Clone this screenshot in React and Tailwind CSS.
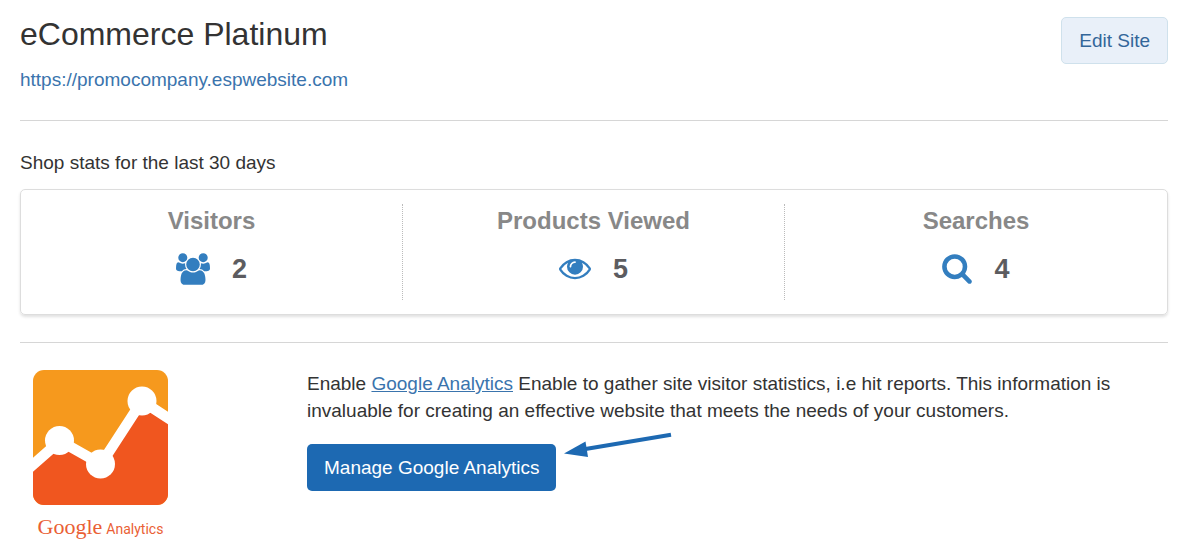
import React from "react";

const UsersIcon = () => (
  <svg viewBox="0 0 1920 1792" className="h-8 w-[34px]" fill="currentColor" aria-hidden="true">
    <path d="M593 896q-162 5-265 128h-134q-82 0-138-40.5t-56-118.5q0-353 124-353 6 0 43.5 21t97.5 42.5 119 21.5q67 0 133-23-5 37-5 66 0 139 81 256zm1071 637q0 120-73 189.5t-194 69.5h-874q-121 0-194-69.5t-73-189.5q0-53 3.5-103.5t14-109 26.5-108.5 43-97.5 62-81 85.5-53.5 111.5-20q10 0 43 21.5t73 48 107 48 135 21.5 135-21.5 107-48 73-48 43-21.5q61 0 111.5 20t85.5 53.5 62 81 43 97.5 26.5 108.5 14 109 3.5 103.5zm-1024-1277q0 106-75 181t-181 75-181-75-75-181 75-181 181-75 181 75 75 181zm704 384q0 159-112.5 271.5t-271.5 112.5-271.5-112.5-112.5-271.5 112.5-271.5 271.5-112.5 271.5 112.5 112.5 271.5zm576 225q0 78-56 118.5t-138 40.5h-134q-103-123-265-128 81-117 81-256 0-29-5-66 66 23 133 23 59 0 119-21.5t97.5-42.5 43.5-21q124 0 124 353zm-128-609q0 106-75 181t-181 75-181-75-75-181 75-181 181-75 181 75 75 181z" />
  </svg>
);

const EyeIcon = () => (
  <svg viewBox="0 64 1792 1792" className="size-8" fill="currentColor" aria-hidden="true">
    <path d="M1664 960q-152-236-381-353 61 104 61 225 0 185-131.5 316.5t-316.5 131.5-316.5-131.5-131.5-316.5q0-121 61-225-229 117-381 353 133 205 333.5 326.5t434.5 121.5 434.5-121.5 333.5-326.5zm-720-384q0-20-14-34t-34-14q-125 0-214.5 89.5t-89.5 214.5q0 20 14 34t34 14 34-14 14-34q0-86 61-147t147-61q20 0 34-14t14-34zm848 384q0 34-20 69-140 230-376.5 368.5t-499.5 138.5-499.5-139-376.5-368q-20-35-20-69t20-69q140-229 376.5-368t499.5-139 499.5 139 376.5 368q20 35 20 69z" />
  </svg>
);

const SearchIcon = () => (
  <svg viewBox="64 64 1664 1792" className="h-8 w-[30px]" fill="currentColor" aria-hidden="true">
    <path d="M1216 832q0-185-131.5-316.5t-316.5-131.5-316.5 131.5-131.5 316.5 131.5 316.5 316.5 131.5 316.5-131.5 131.5-316.5zm512 832q0 52-38 90t-90 38q-54 0-90-38l-343-342q-179 124-399 124-143 0-273.5-55.5t-225-150-150-225-55.5-273.5 55.5-273.5 150-225 225-150 273.5-55.5 273.5 55.5 225 150 150 225 55.5 273.5q0 220-124 399l343 343q37 37 37 90z" />
  </svg>
);

const AnalyticsLogo = () => (
  <div className="flex w-[135px] flex-col items-center">
    <svg viewBox="0 0 135 135" className="size-[135px]" aria-hidden="true">
      <defs>
        <clipPath id="tile">
          <rect width="135" height="135" rx="11" />
        </clipPath>
      </defs>
      <g clipPath="url(#tile)">
        <rect width="135" height="135" fill="#f6991d" />
        <path d="M0 96L27 71L68 94L109 31L135 48V135H0Z" fill="#f0561f" />
        <path d="M-6 100L27 71L68 94L109 31L141 52" fill="none" stroke="#fff" strokeWidth="10.5" />
        <circle cx="26.5" cy="70.5" r="14.5" fill="#fff" />
        <circle cx="67.5" cy="94" r="14.5" fill="#fff" />
        <circle cx="109" cy="31" r="14.5" fill="#fff" />
      </g>
    </svg>
    <p className="mt-2 flex items-baseline gap-1 leading-7 text-[#ea5f35]">
      <span className="font-['Liberation_Serif',serif] text-[22px]">Google</span>
      <span className="font-[Roboto,sans-serif] text-[14px]">Analytics</span>
    </p>
  </div>
);

const Arrow = () => (
  <svg viewBox="0 0 108 28" className="-mt-3 ml-2 h-7 w-[108px] shrink-0" aria-hidden="true">
    <path d="M20 17.3L107 2.7" stroke="#1d69b2" strokeWidth="4" />
    <path d="M0 21.5L21.5 9.5L24 25Z" fill="#1d69b2" />
  </svg>
);

const stats = [
  { label: "Visitors", value: 2, icon: <UsersIcon /> },
  { label: "Products Viewed", value: 5, icon: <EyeIcon /> },
  { label: "Searches", value: 4, icon: <SearchIcon /> },
];

const App = () => {
  return (
    <main className="bg-white px-5 pt-4 pr-[14px] font-['Liberation_Sans',Arial,sans-serif] text-[19px] leading-[27px] text-[#333]">
      {/* Site header */}
      <header className="flex items-start justify-between border-b border-[#d6d6d6] pb-[27px]">
        <div>
          <h1 className="text-[32px] leading-9">eCommerce Platinum</h1>
          <a href="https://promocompany.espwebsite.com" className="mt-[14px] block text-[#3a74ad]">
            https://promocompany.espwebsite.com
          </a>
        </div>
        <button
          type="button"
          className="mt-px rounded-[5px] border border-[#cfe1ec] bg-[#e9f0f9] px-[17px] py-[9px] text-[#336699]"
        >
          Edit Site
        </button>
      </header>

      {/* Shop stats */}
      <section className="border-b border-[#d6d6d6] pt-7 pb-[27px]">
        <h2>Shop stats for the last 30 days</h2>
        <div className="mt-[13px] grid grid-cols-3 divide-x divide-dotted divide-[#bbb] rounded-[5px] border border-[#ddd] py-[14px] shadow-[0_2px_3px_rgba(0,0,0,0.12)]">
          {stats.map((stat) => (
            <div key={stat.label} className="flex flex-col items-center pb-[14px]">
              <h3 className="text-[24px] leading-[34px] font-bold text-[#888]">{stat.label}</h3>
              <div className="mt-[14px] flex items-center gap-[22px] text-[#337ebf]">
                {stat.icon}
                <span className="text-[27px] leading-[34px] font-bold text-[#5c5c60]">{stat.value}</span>
              </div>
            </div>
          ))}
        </div>
      </section>

      {/* Google Analytics */}
      <section className="flex pt-[27px]">
        <div className="w-1/4 shrink-0 pl-[13px]">
          <AnalyticsLogo />
        </div>
        <div className="min-w-0 flex-1">
          <p>
            Enable{" "}
            <a href="#analytics" className="text-[#3a74ad] underline">
              Google Analytics
            </a>{" "}
            Enable to gather site visitor statistics, i.e hit reports. This information is
            invaluable for creating an effective website that meets the needs of your customers.
          </p>
          <div className="mt-5 flex items-start">
            <button type="button" className="rounded-[5px] bg-[#1d69b2] px-[17px] py-[10px] text-white">
              Manage Google Analytics
            </button>
            <Arrow />
          </div>
        </div>
      </section>
    </main>
  );
};

export default App;
